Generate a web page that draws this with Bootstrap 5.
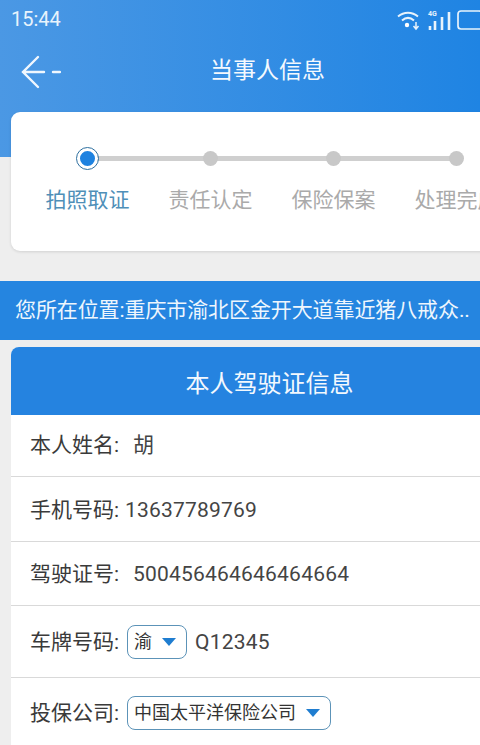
<!DOCTYPE html>
<html lang="zh-CN">
<head>
<meta charset="utf-8">
<title>当事人信息</title>
<link href="https://cdn.jsdelivr.net/npm/bootstrap@5.3.0/dist/css/bootstrap.min.css" rel="stylesheet">
<style>
html,body{width:480px;height:745px;overflow:hidden;margin:0}
body{background:#eeeeee;font-family:"Roboto","Noto Sans CJK SC",sans-serif;color:#333}
.top-area{height:157px;background:linear-gradient(90deg,#4b98e4,#1f84e3);color:#fff}
.status-bar{height:38px;padding:6px 0 0 11px;font-size:20px;line-height:26px;color:#e8f3fc}
.status-icons{width:84px;margin-top:2px;flex:none}
.tiny-net{font-size:7px;font-weight:700;fill:#e8f3fc;font-family:"Roboto",sans-serif}
.title-bar{height:66px}
.back-btn{width:40px;height:36px;margin:3px 0 0 21px;flex:none}
.page-title{font-size:23px;line-height:30px;margin-left:149px;color:#f4f9fe}
.steps-card{height:139px;margin:-45px -40px 0 11px;border-radius:9px;background:#fff;box-shadow:0 1px 3px rgba(0,0,0,.12);padding-top:34px;padding-left:15px}
.step-item{width:123px;flex:none;position:relative;text-align:center;white-space:nowrap}
.step-dot{display:block;width:15px;height:15px;border-radius:50%;background:#c8c8c8;margin:5px auto 20px;position:relative;z-index:1}
.step-item:not(:last-child)::after{content:"";position:absolute;left:61px;width:123px;top:10px;height:5px;background:#cfcfcf}
.step-active .step-dot{width:21px;height:21px;margin:2px auto 17px;background:#1e82e0;border:3px solid #fff;outline:1px solid #2d6f9f}
.step-text{font-size:21px;line-height:28px;color:#aaaaaa}
.step-active .step-text{color:#4f8fb8}
.location-bar{height:59px;margin-top:30px;background:#2585e0;color:#eef6fd;font-size:21px;line-height:59px;padding-left:15px;white-space:nowrap;overflow:hidden;letter-spacing:-.1px}
.info-card{margin:7px -48px 0 11px;background:#fff;border-radius:8px 8px 0 0;overflow:hidden}
.info-head{height:68px;background:#2583e0;color:#f2f8fe;font-size:24px;line-height:74px;text-align:center}
.info-row{display:flex;align-items:center;padding:1px 0 0 19px;font-size:21px;color:#3a3a3a;border-bottom:1px solid #d9d9d9}
.row-a{height:62px}.row-b{height:65px;padding-top:3px}.row-c{height:64px;padding-top:2px}.row-d{height:72px;padding-top:2px}.row-e{height:70px;border-bottom:0}
.row-val{color:#444;letter-spacing:.2px}
.val-name{margin-left:14px}.val-phone{margin-left:6px}.val-licence{margin-left:14px}.val-plate{margin-left:8px}
.pick-box{height:34px;border:1.5px solid #5c93b8;border-radius:8px;display:inline-flex;align-items:center;font-size:18px;color:#333;background:#fff;padding:0 10px 0 6px;margin:-2px 0 0 8px}
.pick-arrow{width:0;height:0;border-left:7.5px solid transparent;border-right:7.5px solid transparent;border-top:8px solid #1f7dd0;margin-left:10px;flex:none}
</style>
</head>
<body>
<div class="top-area">
  <div class="status-bar d-flex justify-content-between">
    <span>15:44</span>
    <svg class="status-icons" width="84" height="24" viewBox="0 0 84 24" fill="none" stroke="#e8f3fc">
      <path d="M2 8.5C8 3.5 16 3.5 22 8.5" stroke-width="2"/>
      <path d="M6 12.5C10 9 14 9 18 12.5" stroke-width="2"/>
      <circle cx="11" cy="17" r="2.2" fill="#fff" stroke="none"/>
      <path d="M20 14v6M17.5 18l2.5 3 2.5-3" stroke-width="1.5"/>
      <text class="tiny-net" x="32" y="8" stroke="none">4G</text>
      <path d="M34 22v-4M39 22v-9M46 22V9M53 22V4" stroke-width="2.6"/>
      <rect x="62" y="3" width="24" height="18" rx="3" stroke-width="1.7"/>
    </svg>
  </div>
  <div class="title-bar d-flex align-items-center">
    <svg class="back-btn" viewBox="0 0 40 36" fill="none" stroke="#f0f7fe" stroke-width="2.4" stroke-linecap="round">
      <path d="M17 2 2 17l15 15M2 17h21"/>
      <path d="M32 17h7"/>
    </svg>
    <div class="page-title">当事人信息</div>
  </div>
</div>
<div class="steps-card d-flex align-items-start">
  <div class="step-item step-active"><span class="step-dot"></span><div class="step-text">拍照取证</div></div>
  <div class="step-item"><span class="step-dot"></span><div class="step-text">责任认定</div></div>
  <div class="step-item"><span class="step-dot"></span><div class="step-text">保险保案</div></div>
  <div class="step-item"><span class="step-dot"></span><div class="step-text">处理完成</div></div>
</div>
<div class="location-bar">您所在位置:重庆市渝北区金开大道靠近猪八戒众..</div>
<div class="info-card">
  <div class="info-head">本人驾驶证信息</div>
  <div class="info-row row-a"><span>本人姓名:</span><span class="row-val val-name">胡</span></div>
  <div class="info-row row-b"><span>手机号码:</span><span class="row-val val-phone">13637789769</span></div>
  <div class="info-row row-c"><span>驾驶证号:</span><span class="row-val val-licence">500456464646464664</span></div>
  <div class="info-row row-d"><span>车牌号码:</span><span class="pick-box">渝<i class="pick-arrow"></i></span><span class="row-val val-plate">Q12345</span></div>
  <div class="info-row row-e"><span>投保公司:</span><span class="pick-box">中国太平洋保险公司<i class="pick-arrow"></i></span></div>
</div>
<script src="https://cdn.jsdelivr.net/npm/bootstrap@5.3.0/dist/js/bootstrap.bundle.min.js"></script>
</body>
</html>
